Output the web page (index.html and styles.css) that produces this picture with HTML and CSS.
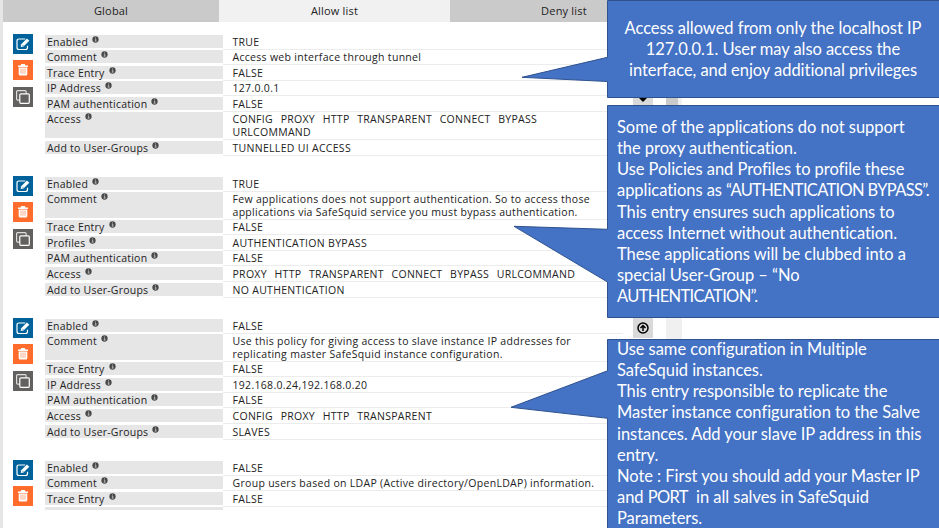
FILE: index.html
```html
<!DOCTYPE html>
<html lang="en">
<head>
<meta charset="utf-8">
<title>Allow list</title>
<link rel="stylesheet" href="styles.css">
</head>
<body>
<svg class="defs" aria-hidden="true">
  <symbol id="edit" viewBox="0 0 20 20"><path d="M12.2 5H6Q4 5 4 7v6.500q0 2 2 2h6.500q2 0 2-2v-1.800" fill="none" stroke="#fff" stroke-width="1.200"/><path d="M7.700 13l.5-2.800 5.700-5.800 2.400 2.300-5.800 5.800z" fill="#fff"/><path d="M9.300 10.800l1 1" stroke="#00629b" stroke-width=".8"/></symbol>
  <symbol id="trash" viewBox="0 0 20 20"><path d="M5 5.500h2.500L8.300 4h3.400l.8 1.500H15V7H5zM5.700 7.500h8.600V14q0 1.500-1.500 1.500H7.200Q5.700 15.500 5.700 14z" fill="#fff"/><path d="M8 8.500v5.300M10 8.500v5.300M12 8.500v5.300" stroke="#ff9a6b" stroke-width=".8"/></symbol>
  <symbol id="copy" viewBox="0 0 20 20"><rect x="3.600" y="3.600" width="9.500" height="9.500" rx="1" fill="none" stroke="#ddd" stroke-width="1.200"/><rect x="6.800" y="6.800" width="9.500" height="9.500" rx="1" fill="#636060" stroke="#fff" stroke-width="1.200"/></symbol>
  <symbol id="info" viewBox="0 0 8 8"><circle cx="4" cy="4" r="3.600" fill="#484848"/><path d="M3.300 3.500h1v2.300M3 5.900h2.200M3.500 2.100h1" stroke="#ddd" stroke-width=".8" fill="none"/></symbol>
</svg>
<main class="page">
  <nav class="tabs"><div class="tab">Global</div><div class="tab active">Allow list</div><div class="tab">Deny list</div></nav>
  <section class="records">
    <article class="record">
      <div class="actions"><svg class="edit"><use href="#edit"/></svg><svg class="trash"><use href="#trash"/></svg><svg class="copy"><use href="#copy"/></svg></div>
      <div class="rows">
        <div class="row"><div class="label">Enabled <svg><use href="#info"/></svg></div><div class="value">TRUE</div></div>
        <div class="row"><div class="label">Comment <svg><use href="#info"/></svg></div><div class="value">Access web interface through tunnel</div></div>
        <div class="row"><div class="label">Trace Entry <svg><use href="#info"/></svg></div><div class="value">FALSE</div></div>
        <div class="row"><div class="label">IP Address <svg><use href="#info"/></svg></div><div class="value">127.0.0.1</div></div>
        <div class="row"><div class="label">PAM authentication <svg><use href="#info"/></svg></div><div class="value">FALSE</div></div>
        <div class="row tall"><div class="label">Access <svg><use href="#info"/></svg></div><div class="value caps">CONFIG&nbsp; PROXY&nbsp; HTTP&nbsp; TRANSPARENT&nbsp; CONNECT&nbsp; BYPASS<br>URLCOMMAND</div></div>
        <div class="row"><div class="label">Add to User-Groups <svg><use href="#info"/></svg></div><div class="value">TUNNELLED UI ACCESS</div></div>
      </div>
    </article>
    <article class="record">
      <div class="actions"><svg class="edit"><use href="#edit"/></svg><svg class="trash"><use href="#trash"/></svg><svg class="copy"><use href="#copy"/></svg></div>
      <div class="rows">
        <div class="row"><div class="label">Enabled <svg><use href="#info"/></svg></div><div class="value">TRUE</div></div>
        <div class="row tall"><div class="label">Comment <svg><use href="#info"/></svg></div><div class="value">Few applications does not support authentication. So to access those<br>applications via SafeSquid service you must bypass authentication.</div></div>
        <div class="row"><div class="label">Trace Entry <svg><use href="#info"/></svg></div><div class="value">FALSE</div></div>
        <div class="row"><div class="label">Profiles <svg><use href="#info"/></svg></div><div class="value">AUTHENTICATION BYPASS</div></div>
        <div class="row"><div class="label">PAM authentication <svg><use href="#info"/></svg></div><div class="value">FALSE</div></div>
        <div class="row"><div class="label">Access <svg><use href="#info"/></svg></div><div class="value caps">PROXY&nbsp; HTTP&nbsp; TRANSPARENT&nbsp; CONNECT&nbsp; BYPASS&nbsp; URLCOMMAND</div></div>
        <div class="row"><div class="label">Add to User-Groups <svg><use href="#info"/></svg></div><div class="value">NO AUTHENTICATION</div></div>
      </div>
    </article>
    <article class="record">
      <div class="actions"><svg class="edit"><use href="#edit"/></svg><svg class="trash"><use href="#trash"/></svg><svg class="copy"><use href="#copy"/></svg></div>
      <div class="rows">
        <div class="row"><div class="label">Enabled <svg><use href="#info"/></svg></div><div class="value">FALSE</div></div>
        <div class="row tall"><div class="label">Comment <svg><use href="#info"/></svg></div><div class="value">Use this policy for giving access to slave instance IP addresses for<br>replicating master SafeSquid instance configuration.</div></div>
        <div class="row"><div class="label">Trace Entry <svg><use href="#info"/></svg></div><div class="value">FALSE</div></div>
        <div class="row"><div class="label">IP Address <svg><use href="#info"/></svg></div><div class="value">192.168.0.24,192.168.0.20</div></div>
        <div class="row"><div class="label">PAM authentication <svg><use href="#info"/></svg></div><div class="value">FALSE</div></div>
        <div class="row"><div class="label">Access <svg><use href="#info"/></svg></div><div class="value caps">CONFIG&nbsp; PROXY&nbsp; HTTP&nbsp; TRANSPARENT</div></div>
        <div class="row"><div class="label">Add to User-Groups <svg><use href="#info"/></svg></div><div class="value">SLAVES</div></div>
      </div>
    </article>
    <article class="record last">
      <div class="actions"><svg class="edit"><use href="#edit"/></svg><svg class="trash"><use href="#trash"/></svg></div>
      <div class="rows">
        <div class="row"><div class="label">Enabled <svg><use href="#info"/></svg></div><div class="value">FALSE</div></div>
        <div class="row"><div class="label">Comment <svg><use href="#info"/></svg></div><div class="value">Group users based on LDAP (Active directory/OpenLDAP) information.</div></div>
        <div class="row"><div class="label">Trace Entry <svg><use href="#info"/></svg></div><div class="value">FALSE</div></div>
        <div class="row"><div class="label"></div><div class="value"></div></div>
      </div>
    </article>
  </section>
</main>
<svg class="overlay" viewBox="0 0 939 528" aria-hidden="true">
  <path d="M633 97h20v8h-20zM633 318h20v20h-20z" fill="#d9d9d9"/>
  <path d="M666 97h12v8h-12z" fill="#cacaca"/><path d="M678 97h4v8h-4zM666 318h16v21h-16z" fill="#f0f0f0"/>
  <path d="M639 98h8l-4 4z" fill="#000"/>
  <circle cx="643" cy="328" r="5" fill="none" stroke="#000" stroke-width="1.500"/>
  <path d="M643 331v-5M640.500 328l2.500-2.500 2.500 2.500" fill="none" stroke="#000" stroke-width="1.500"/>
  <g fill="#4472c4" stroke="#2f528f">
    <path d="M607.500.5H940v97H607.500V81.500L522 77.300l85.500-20z"/>
    <path d="M607.500 105.500H940v212H607.500V282L514 226.300l93.500 3z"/>
    <path d="M607.500 339.500H940V530H607.500V418.300L511 407.300l96.500-36.500z"/>
  </g>
</svg>
<aside class="notes">
  <div class="note first"><p>Access allowed from only the localhost IP</p><p>127.0.0.1. User may also access the</p><p>interface, and enjoy additional privileges</p></div>
  <div class="note second"><p>Some of the applications do not support</p><p>the proxy authentication.</p><p>Use Policies and Profiles to profile these</p><p>applications as <span class="tight">“AUTHENTICATION BYPASS”.</span></p><p>This entry ensures such applications to</p><p>access Internet without authentication.</p><p>These applications will be clubbed into a</p><p>special User-Group – “No</p><p><span class="tight">AUTHENTICATION”.</span></p></div>
  <div class="note third"><p>Use same configuration in Multiple</p><p>SafeSquid instances.</p><p>This entry responsible to replicate the</p><p>Master instance configuration to the Salve</p><p>instances. Add your slave IP address in this</p><p>entry.</p><p>Note : First you should add your Master IP</p><p>and <span class="tight">PORT</span>&nbsp; in all salves in SafeSquid</p><p>Parameters.</p></div>
</aside>
</body>
</html>
```
FILE: styles.css
```css
* { box-sizing: border-box; }
body { margin: 0; width: 939px; height: 528px; overflow: hidden; position: relative; background: #fff; color: #222; font: 10.5px/14px "Open Sans", "Noto Sans", sans-serif; letter-spacing: .3px; }
.defs { position: absolute; width: 0; height: 0; }
.page { height: 528px; border-left: 3px solid #e6e6e6; }
.tabs { display: grid; grid-template-columns: 216px 231px 228px; height: 22px; font-size: 11px; line-height: 22px; text-align: center; letter-spacing: .2px; }
.tab { background: #cacaca; }
.tab.active { background: #f1f1f1; }
.records { padding: 12px 0 0 10px; }
.record { display: flex; gap: 12px; height: 142px; }
.record.last { height: 50px; overflow: hidden; }
.actions { display: flex; flex-direction: column; gap: 6.400px; width: 20px; }
.actions svg { display: block; width: 20px; height: 20px; flex: none; }
.edit { background: #00629b; }
.trash { background: #ff6c2c; }
.copy { background: #636060; }
.rows { width: 578px; padding-top: .6px; }
.row { display: flex; height: 15.55px; }
.row.tall { height: 28.2px; }
.label { width: 178px; height: calc(100% - 2.5px); background: #e6e6e6; padding-left: 2px; white-space: nowrap; letter-spacing: .22px; }
.label svg { width: 7px; height: 7px; margin-left: 1px; vertical-align: 3px; }
.value { flex: 1; padding-left: 9.500px; height: calc(100% - .5px); border-bottom: 1px solid #ececec; white-space: nowrap; }
.tall .value { line-height: 13px; padding-top: .5px; }
.caps { word-spacing: .8px; }
.overlay { position: absolute; left: 0; top: 0; width: 939px; height: 528px; }
.notes { position: absolute; left: 607px; top: 0; width: 332px; height: 528px; color: #fff; font: 16.5px/21.15px Lato, sans-serif; letter-spacing: -.05px; font-variant-ligatures: none; }
.note { padding-left: 10px; white-space: nowrap; }
.note p { margin: 0; }
.tight { letter-spacing: -.68px; }
.first { height: 105px; padding: 18px 0 0; text-align: center; }
.second { height: 234px; padding-top: 12px; }
```
